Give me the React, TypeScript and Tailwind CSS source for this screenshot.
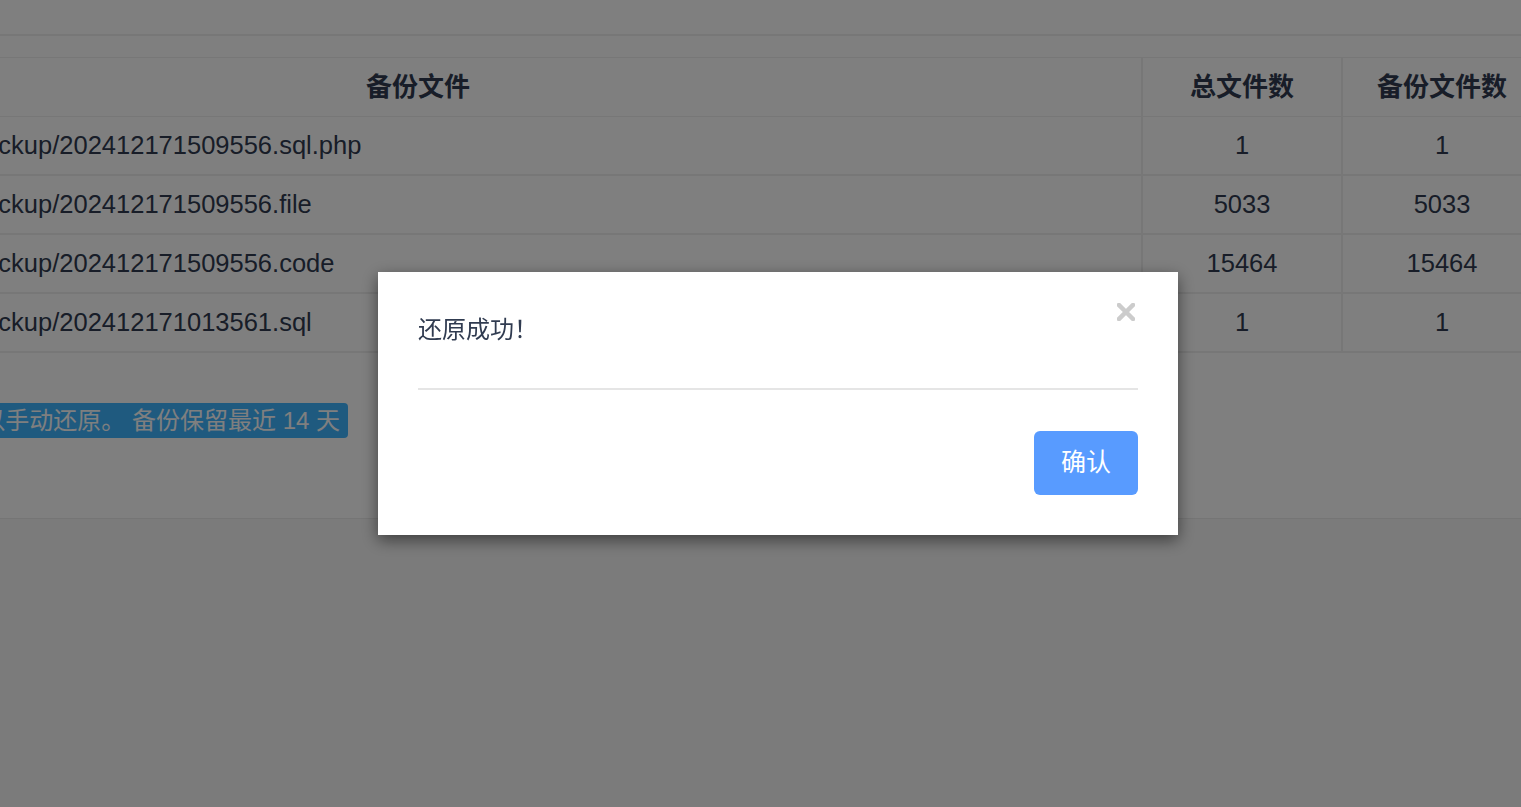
import { useState } from 'react';

const ROWS = [
  { file: 'backup/202412171509556.sql.php', total: '1', backed: '1' },
  { file: 'backup/202412171509556.file', total: '5033', backed: '5033' },
  { file: 'backup/202412171509556.code', total: '15464', backed: '15464' },
  { file: 'backup/202412171013561.sql', total: '1', backed: '1' },
];

const cols = 'grid grid-cols-[1446px_200px_200px]';

function BackupTable() {
  return (
    <div className="-ml-[305px] w-[1846px] border-t border-[#eeeeee]">
      <div className={`${cols} h-[59px] border-b border-[#eeeeee] text-[26px] font-bold`}>
        <div className="flex items-center justify-center">备份文件</div>
        <div className="flex items-center justify-center border-l-2 border-[#eeeeee]">总文件数</div>
        <div className="flex items-center justify-center border-l-2 border-[#eeeeee]">备份文件数</div>
      </div>
      {ROWS.map((row) => (
        <div key={row.file} className={`${cols} h-[59px] border-b-2 border-[#eeeeee] text-[25.5px]`}>
          <div className="flex items-center pl-[275px] whitespace-nowrap">{row.file}</div>
          <div className="flex items-center justify-center border-l-2 border-[#eeeeee]">{row.total}</div>
          <div className="flex items-center justify-center border-l-2 border-[#eeeeee]">{row.backed}</div>
        </div>
      ))}
    </div>
  );
}

function AlertDialog({ onClose }: { onClose: () => void }) {
  return (
    <div className="fixed inset-0 bg-black/50">
      <div className="absolute left-[378px] top-[272px] w-[800px] bg-white px-10 shadow-[0_5px_15px_rgba(0,0,0,0.5)]">
        <div className="relative border-b-2 border-[#e5e5e5] pt-10 pb-10">
          <p className="text-[24px] leading-[36px] text-[#303b50]">还原成功！</p>
          <button
            onClick={onClose}
            className="absolute right-[2px] top-[30px] flex h-[20px] w-[20px] items-center justify-center"
            aria-label="close"
          >
            <svg width="18" height="18" viewBox="0 0 18 18">
              <path d="M2 2 L16 16 M16 2 L2 16" stroke="#cccccc" strokeWidth="4.5" strokeLinecap="square" />
            </svg>
          </button>
        </div>
        <div className="flex justify-end pt-[41px] pb-10">
          <button
            onClick={onClose}
            className="h-16 w-[104px] rounded-md bg-[#589bff] text-[25px] text-white"
          >
            确认
          </button>
        </div>
      </div>
    </div>
  );
}

export default function App() {
  const [open, setOpen] = useState(true);

  return (
    <div
      className="relative h-[807px] w-full overflow-hidden bg-[#f6f6f6] text-[#303b50]"
      style={{ fontFamily: '"Liberation Sans", Arial, "Noto Sans CJK SC", sans-serif' }}
    >
      <div className="h-[519px] overflow-hidden border-b border-[#eaeaea] bg-white">
        <div className="h-[36px] border-b-2 border-[#eeeeee]" />
        <div className="pt-[21px]">
          <BackupTable />
        </div>
        <div className="mt-[50px] flex w-[348px] justify-end whitespace-nowrap">
          <span className="rounded bg-[#3eb4ff] px-2 text-[24px] leading-[35px] text-white">
            备份后可以手动还原。 备份保留最近 14 天
          </span>
        </div>
      </div>
      {open && <AlertDialog onClose={() => setOpen(false)} />}
    </div>
  );
}
